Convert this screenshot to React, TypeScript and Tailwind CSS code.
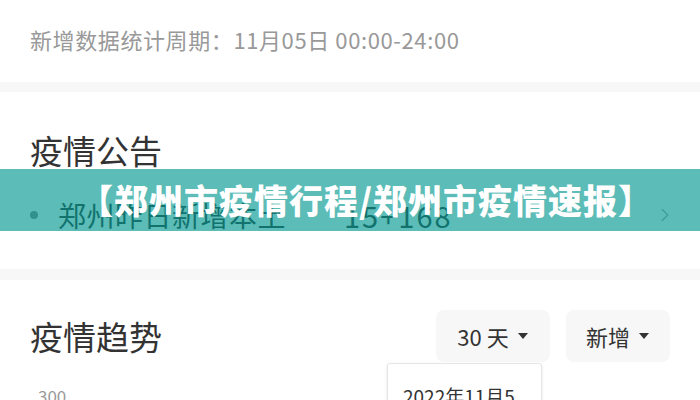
import { ChevronRight } from 'lucide-react';

const font = { fontFamily: '"Noto Sans CJK SC", "Noto Sans", sans-serif' };

function Caret() {
  return (
    <svg width="12" height="8" viewBox="0 0 12 8" className="ml-2">
      <path d="M1 1 L11 1 L6 7 Z" fill="#333" />
    </svg>
  );
}

export default function App() {
  return (
    <div className="relative h-[400px] w-[700px] overflow-hidden bg-white" style={font}>
      {/* stats period */}
      <div className="h-[82px] px-[30px] pt-[26px]">
        <p className="text-[22px] leading-[26px] tracking-[0.6px] text-[#999]">新增数据统计周期：11月05日 00:00-24:00</p>
      </div>
      <div className="h-[10px] bg-[#f7f7f7]" />

      {/* notices */}
      <section className="h-[177px] px-[30px] pt-[36px]">
        <h2 className="text-[33px] leading-[44px] text-[#333]">疫情公告</h2>
        <div className="mt-[23px] flex h-[40px] items-center">
          <span className="mr-[20px] h-[8px] w-[8px] rounded-full bg-[#888]" />
          <span className="text-[28px] leading-[40px] tracking-[0.5px] text-[#333]">郑州昨日新增本土</span>
          <span className="ml-[58px] text-[29px] leading-[40px] tracking-[2px] text-[#333]">15+168</span>
          <ChevronRight className="-mr-[6px] ml-auto h-[22px] w-[22px] text-[#aaa]" strokeWidth={1.5} />
        </div>
      </section>
      <div className="h-[11px] bg-[#f7f7f7]" />

      {/* trend */}
      <section className="relative px-[30px] pt-[30px]">
        <div className="flex items-center justify-between">
          <h2 className="text-[33px] leading-[44px] text-[#333]">疫情趋势</h2>
          <div className="flex gap-[16px]">
            <button className="flex h-[52px] w-[114px] items-center justify-center rounded-[8px] bg-[#f7f7f7] text-[22px] text-[#333]">
              30 天<Caret />
            </button>
            <button className="flex h-[52px] w-[104px] items-center justify-center rounded-[8px] bg-[#f7f7f7] text-[22px] text-[#333]">
              新增<Caret />
            </button>
          </div>
        </div>
        <div className="pl-[8px] pt-[24px] text-[17px] leading-[20px] text-[#999]">300</div>
        <div className="absolute left-[387px] top-[83px] h-[60px] w-[155px] rounded-[3px] border border-[#e6e6e6] bg-white px-[15px] pt-[21px] shadow-sm">
          <p className="text-[19px] leading-[22px] text-[#333]">2022年11月5日</p>
        </div>
      </section>

      {/* overlay banner */}
      <div className="absolute left-0 top-[169px] flex h-[62px] w-full items-center justify-center bg-[rgba(0,150,143,0.64)] pl-[32px]">
        <p className="text-[34px] font-black leading-[40px] tracking-[1px] text-white">【郑州市疫情行程/郑州市疫情速报】</p>
      </div>
    </div>
  );
}
